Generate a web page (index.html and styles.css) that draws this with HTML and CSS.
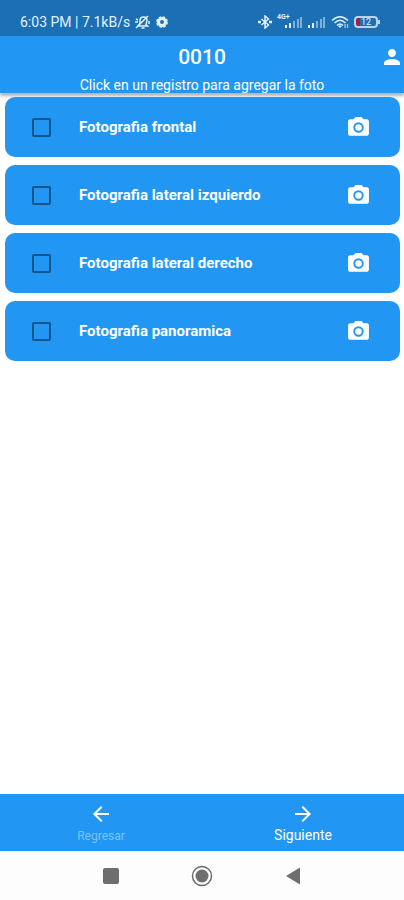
FILE: index.html
```html
<!DOCTYPE html>
<html lang="es">
<head>
  <meta charset="UTF-8">
  <meta name="viewport" content="width=device-width, initial-scale=1.0">
  <title>Fotografias</title>
  <link rel="stylesheet" href="styles.css">
</head>
<body>
  <!-- Shared icons -->
  <svg class="sprite" aria-hidden="true">
    <symbol id="camera" viewBox="0 0 24 24">
      <path fill-rule="evenodd" d="M9 2 7.200 4H4c-1.100 0-2 .9-2 2v12c0 1.100.9 2 2 2h16c1.100 0 2-.9 2-2V6c0-1.100-.9-2-2-2h-3.200L15 2H9zm3 5a5 5 0 1 1 0 10 5 5 0 0 1 0-10zm0 1.800a3.200 3.200 0 1 0 0 6.400 3.200 3.200 0 0 0 0-6.400z"/>
    </symbol>
    <symbol id="signal" viewBox="0 0 18 12">
      <path d="M0 9h2v3H0zM4 7h2v5H4z"/>
      <path opacity=".5" d="M8 5h2v7H8zM12 3h2v9h-2zM15 1h2v11h-2z"/>
    </symbol>
  </svg>

  <div class="status-bar">
    <div class="status-group">
      <span>6:03 PM | 7.1kB/s</span>
      <svg class="status-mute" viewBox="0 0 16 14">
        <path d="M4 10.500 6 8.500V5.500C6 3.500 7.500 2 9.500 2S13 3.500 13 5.500L12 9.500 13.500 11H4zM7.500 13h3M2 13 14 1M1 7h3M2 4l2 1M15 6v3"/>
      </svg>
      <svg class="status-gear" viewBox="0 0 12 12">
        <circle cx="6" cy="6" r="3.500" stroke-width="3"/>
        <circle cx="6" cy="6" r="5.200" stroke-width="1.400" stroke-dasharray="2.600 1.480"/>
      </svg>
    </div>
    <div class="status-group status-right">
      <svg class="status-bluetooth" viewBox="0 0 14 14">
        <path d="M3.500 4 10.500 10 7 13V1L10.500 4 3.500 10"/>
        <path stroke-width="2.500" d="M0 7h3M11 7h3"/>
      </svg>
      <div class="network">
        <span class="network-type">4G+</span>
        <svg class="status-signal"><use href="#signal"/></svg>
      </div>
      <svg class="status-signal"><use href="#signal"/></svg>
      <svg class="status-wifi" viewBox="0 0 18 14">
        <path d="M1 5.500Q9-2 17 5.500M3.500 8Q9 2.500 14.500 8M6 10.500Q9 7.500 12 10.500"/>
        <path class="solid" d="M9 13 7 11Q9 9.500 11 11z"/>
        <path opacity=".6" d="M14 13V9M16.500 9v4"/>
      </svg>
      <div class="battery"><span>12</span></div>
    </div>
  </div>

  <header class="header">
    <div class="title-row">
      <h1>0010</h1>
      <button class="profile-btn" aria-label="Perfil">
        <svg viewBox="0 0 24 24"><path d="M12 12c2.210 0 4-1.790 4-4s-1.790-4-4-4-4 1.790-4 4 1.790 4 4 4zm0 2c-2.670 0-8 1.340-8 4v2h16v-2c0-2.660-5.330-4-8-4z"/></svg>
      </button>
    </div>
    <p>Click en un registro para agregar la foto</p>
  </header>

  <main class="photo-list">
    <div class="photo-card">
      <input type="checkbox" id="frontal">
      <label for="frontal">Fotografia frontal</label>
      <button class="camera-btn" aria-label="Tomar fotografia frontal"><svg><use href="#camera"/></svg></button>
    </div>
    <div class="photo-card">
      <input type="checkbox" id="izquierdo">
      <label for="izquierdo">Fotografia lateral izquierdo</label>
      <button class="camera-btn" aria-label="Tomar fotografia lateral izquierdo"><svg><use href="#camera"/></svg></button>
    </div>
    <div class="photo-card">
      <input type="checkbox" id="derecho">
      <label for="derecho">Fotografia lateral derecho</label>
      <button class="camera-btn" aria-label="Tomar fotografia lateral derecho"><svg><use href="#camera"/></svg></button>
    </div>
    <div class="photo-card">
      <input type="checkbox" id="panoramica">
      <label for="panoramica">Fotografia panoramica</label>
      <button class="camera-btn" aria-label="Tomar fotografia panoramica"><svg><use href="#camera"/></svg></button>
    </div>
  </main>

  <nav class="bottom-nav">
    <button class="nav-btn back">
      <svg viewBox="0 0 24 24"><path d="M20 11H7.830l5.590-5.590L12 4l-8 8 8 8 1.410-1.410L7.830 13H20v-2z"/></svg>
      <span>Regresar</span>
    </button>
    <button class="nav-btn">
      <svg viewBox="0 0 24 24"><path d="m12 4-1.410 1.410L16.170 11H4v2h12.170l-5.580 5.590L12 20l8-8z"/></svg>
      <span>Siguiente</span>
    </button>
  </nav>

  <div class="system-nav">
    <button aria-label="Recientes"><svg viewBox="0 0 22 22"><rect x="3" y="3" width="16" height="16" rx="2"/></svg></button>
    <button aria-label="Inicio"><svg viewBox="0 0 22 22"><circle cx="11" cy="11" r="9.500" fill="none" stroke="#6e6e6e" stroke-width="1.500"/><circle cx="11" cy="11" r="6.500"/></svg></button>
    <button aria-label="Volver"><svg viewBox="0 0 22 22"><path d="M4 11 18 2.500v17z"/></svg></button>
  </div>
</body>
</html>
```

FILE: styles.css
```css
* {
  box-sizing: border-box;
}
body {
  margin: 0;
  min-height: 100vh;
  display: flex;
  flex-direction: column;
  background-color: #fff;
  color: #fff;
  font-family: Roboto, sans-serif;
}
button {
  padding: 0;
  border: none;
  background: none;
  color: inherit;
  font-family: inherit;
  cursor: pointer;
}
svg {
  display: block;
  fill: currentColor;
}
.sprite {
  position: absolute;
  width: 0;
  height: 0;
}

/* Status bar */
.status-bar {
  height: 36px;
  padding: 8px 26px 0 20px;
  display: flex;
  align-items: center;
  justify-content: space-between;
  background-color: #1b6fb5;
  color: #e3f1fc;
  font-size: 14px;
}
.status-group {
  display: flex;
  align-items: center;
  gap: 4px;
}
.status-right {
  gap: 5px;
}
.status-mute,
.status-gear,
.status-bluetooth,
.status-wifi {
  fill: none;
  stroke: currentColor;
  stroke-width: 1.5;
}
.status-mute {
  width: 16px;
  height: 14px;
}
.status-gear {
  width: 12px;
  height: 12px;
  margin-left: 2px;
}
.status-bluetooth {
  width: 14px;
  height: 14px;
}
.status-signal {
  width: 18px;
  height: 12px;
}
.network {
  position: relative;
  padding-left: 8px;
}
.network-type {
  position: absolute;
  top: -2px;
  left: 0;
  font-size: 7px;
  font-weight: 700;
  line-height: 7px;
}
.status-wifi {
  width: 18px;
  height: 14px;
}
.status-wifi .solid {
  fill: currentColor;
  stroke: none;
}
.battery {
  position: relative;
  width: 24px;
  height: 12px;
  border: 2px solid #b5d4ee;
  border-radius: 4px;
  background: linear-gradient(to right, #a3203f 4px, transparent 4px);
  font-size: 9px;
  line-height: 8px;
  text-align: center;
}
.battery::after {
  content: "";
  position: absolute;
  top: 2px;
  right: -4px;
  width: 2px;
  height: 4px;
  background-color: #b5d4ee;
}

/* Header */
.header {
  height: 57px;
  background-color: #2196f3;
  box-shadow: 0 3px 3px rgba(0, 0, 0, 0.3);
  text-align: center;
}
.title-row {
  height: 41px;
  display: grid;
  grid-template-columns: 1fr auto 1fr;
  align-items: center;
}
h1 {
  grid-column: 2;
  margin: 0;
  font-size: 21px;
  font-weight: 500;
}
.profile-btn {
  justify-self: end;
}
.profile-btn svg {
  width: 24px;
  height: 24px;
}
.header p {
  margin: 0;
  font-size: 14px;
  line-height: 16px;
}

/* Photo list */
.photo-list {
  flex: 1;
  padding: 4px 4px 4px 5px;
  display: flex;
  flex-direction: column;
  gap: 8px;
}
.photo-card {
  height: 60px;
  padding: 0 29px 0 27px;
  display: flex;
  align-items: center;
  border-radius: 10px;
  background-color: #2196f3;
}
.photo-card input {
  appearance: none;
  width: 19px;
  height: 19px;
  margin: 0;
  border: 2px solid #12548c;
  border-radius: 2px;
}
.photo-card input:checked {
  background-color: #12548c;
}
.photo-card label {
  flex: 1;
  margin-left: 28px;
  font-size: 15px;
  font-weight: 700;
}
.camera-btn svg {
  width: 25px;
  height: 25px;
}

/* Bottom navigation */
.bottom-nav {
  height: 57px;
  display: flex;
  background-color: #2196f3;
}
.nav-btn {
  flex: 1;
  display: flex;
  flex-direction: column;
  align-items: center;
  padding-top: 8px;
  font-size: 14px;
  line-height: 18px;
}
.nav-btn svg {
  width: 24px;
  height: 24px;
}
.nav-btn.back span {
  color: #7fc1f8;
  font-size: 12px;
  line-height: 20px;
}

/* Android buttons */
.system-nav {
  height: 49px;
  display: flex;
  align-items: center;
  justify-content: center;
  gap: 69px;
  background-color: #fdfdfd;
  color: #6e6e6e;
}
.system-nav svg {
  width: 22px;
  height: 22px;
}
```
